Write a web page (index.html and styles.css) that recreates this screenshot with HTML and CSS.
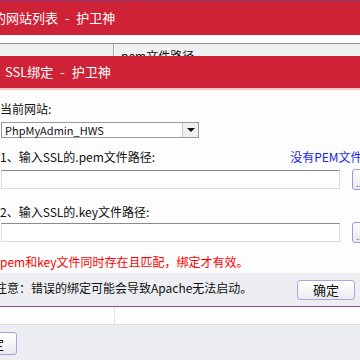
FILE: index.html
```html
<!DOCTYPE html>
<html>
<head>
    <meta charset="UTF-8">
    <meta name="viewport" content="width=device-width, initial-scale=1.0">
    <title>SSL绑定 - 护卫神</title>
    <link rel="stylesheet" href="styles.css">
</head>
<body>
    <!-- 后面的窗口: 网站列表 -->
    <div class="back-title"><span>的网站列表 - 护卫神</span></div>
    <div class="back-gap"></div>
    <div class="back-head">
        <div class="col1"></div>
        <div class="col2">pem文件路径</div>
    </div>

    <!-- 前面的对话框 -->
    <div class="dialog">
        <div class="dlg-title">SSL绑定 - 护卫神</div>
        <div class="dlg-body">
            <div class="label site-label">当前网站:</div>
            <div class="select">
                <span>PhpMyAdmin_HWS</span>
                <div class="arrow"><i></i></div>
            </div>
            <div class="label-row">
                <span>1、输入SSL的.pem文件路径:</span>
                <a class="link">没有PEM文件？</a>
            </div>
            <div class="file-row">
                <div class="input"></div>
                <div class="browse">...</div>
            </div>
            <div class="label key-label">2、输入SSL的.key文件路径:</div>
            <div class="file-row key-row">
                <div class="input"></div>
                <div class="browse">...</div>
            </div>
            <div class="warn">pem和key文件同时存在且匹配，绑定才有效。</div>
        </div>
        <div class="dlg-foot">
            <span class="note">注意：错误的绑定可能会导致Apache无法启动。</span>
            <button class="btn ok">确定</button>
        </div>
    </div>

    <div class="back-row">
        <div class="col1"></div>
        <div class="col2"></div>
    </div>
    <div class="back-foot">
        <button class="btn back-btn">确定</button>
    </div>
</body>
</html>
```

FILE: styles.css
```css
html, body {
    margin: 0;
    width: 360px;
    height: 360px;
    overflow: hidden;
    background: #eceef2;
    font-family: "Noto Sans CJK SC", "DejaVu Sans", sans-serif;
    font-size: 12px;
    color: #111;
}

/* 后面的窗口 */
.back-title {
    height: 34px;
    border-top: 1px solid #8a3b7c;
    background: #cf2236;
    color: #fff;
    font-size: 13px;
    line-height: 34px;
    white-space: nowrap;
    text-indent: -7px;
    word-spacing: 4px;
}
.back-gap {
    height: 8px;
    background: #fff;
}
.back-head {
    height: 12px;
    border-top: 1px solid #8e8e8e;
    background: #eff0f2;
    display: flex;
    overflow: hidden;
}
.back-head .col1 {
    width: 113px;
    border-right: 1px solid #a4a4a4;
}
.back-head .col2 {
    padding: 4px 0 0 6px;
    line-height: 16px;
    white-space: nowrap;
    border-left: 1px solid #fff;
}

/* 对话框 */
.dialog {
    border-bottom: 1px solid #9b4a8d;
}
.dlg-title {
    height: 32px;
    line-height: 32px;
    padding-left: 5px;
    background: #cf2236;
    border-bottom: 2px solid #f3c6ca;
    color: #fff;
    font-size: 13px;
    white-space: nowrap;
    word-spacing: 4px;
}
.dlg-body {
    background: #fdfdfd;
    padding: 11px 0 3px 0;
}
.label {
    line-height: 16px;
    white-space: nowrap;
}
.select {
    margin: 5px 0 0 1px;
    width: 196px;
    height: 14px;
    border: 1px solid #9a9a9a;
    background: #fff;
    display: flex;
    align-items: center;
    justify-content: space-between;
    font-size: 11px;
}
.select span {
    padding-left: 3px;
}
.arrow {
    width: 15px;
    height: 14px;
    border-left: 1px solid #c8c8c8;
    background: #f0f0f0;
    display: flex;
    align-items: center;
    justify-content: center;
}
.arrow i {
    width: 0;
    height: 0;
    border-left: 4px solid transparent;
    border-right: 4px solid transparent;
    border-top: 4px solid #111;
}
.label-row {
    margin-top: 11px;
    line-height: 16px;
    display: flex;
    white-space: nowrap;
}
.link {
    margin-left: 135px;
    color: #1c1ff0;
    font-size: 12px;
}
.file-row {
    margin-top: 5px;
    display: flex;
    gap: 12px;
}
.input {
    flex-shrink: 0;
    width: 337px;
    height: 17px;
    margin-left: 1px;
    border: 1px solid #dcdcdc;
    border-top: 1px solid #8a8a8a;
    background: #fff;
}
.browse {
    flex-shrink: 0;
    width: 22px;
    height: 19px;
    margin-top: -1px;
    border: 1px solid #a197dc;
    border-radius: 3px;
    background: linear-gradient(#ffffff, #e8e8ee);
    font-size: 10px;
    line-height: 26px;
    padding-left: 3px;
    color: #555;
}
.key-label {
    margin-top: 14px;
}
.key-row {
    margin-top: 3px;
}
.warn {
    margin-top: 11px;
    line-height: 16px;
    color: #f00;
    white-space: nowrap;
}
.dlg-foot {
    height: 26px;
    padding-top: 7px;
    background: #eceef1;
    display: flex;
    align-items: flex-start;
}
.note {
    margin-left: -5px;
    line-height: 16px;
    white-space: nowrap;
}
.btn {
    font-family: "Noto Sans CJK SC", "DejaVu Sans", sans-serif;
    font-size: 13px;
    color: #111;
    border: 1px solid #aea3e3;
    border-radius: 3px;
    background: linear-gradient(#ffffff, #ebebef);
    padding: 0;
}
.ok {
    margin-left: auto;
    margin-right: 5px;
    width: 58px;
    height: 20px;
    line-height: 18px;
}

/* 后面窗口的下半部分 */
.back-row {
    height: 17px;
    background: #fff;
    border-bottom: 1px solid #dedede;
    display: flex;
}
.back-row .col1 {
    width: 114px;
    border-right: 1px solid #e6e6e6;
}
.back-foot {
    padding-top: 7px;
}
.back-btn {
    margin-left: -42px;
    width: 59px;
    height: 23px;
    text-align: right;
    padding-right: 12px;
    border-color: #a89ee0;
}
```
